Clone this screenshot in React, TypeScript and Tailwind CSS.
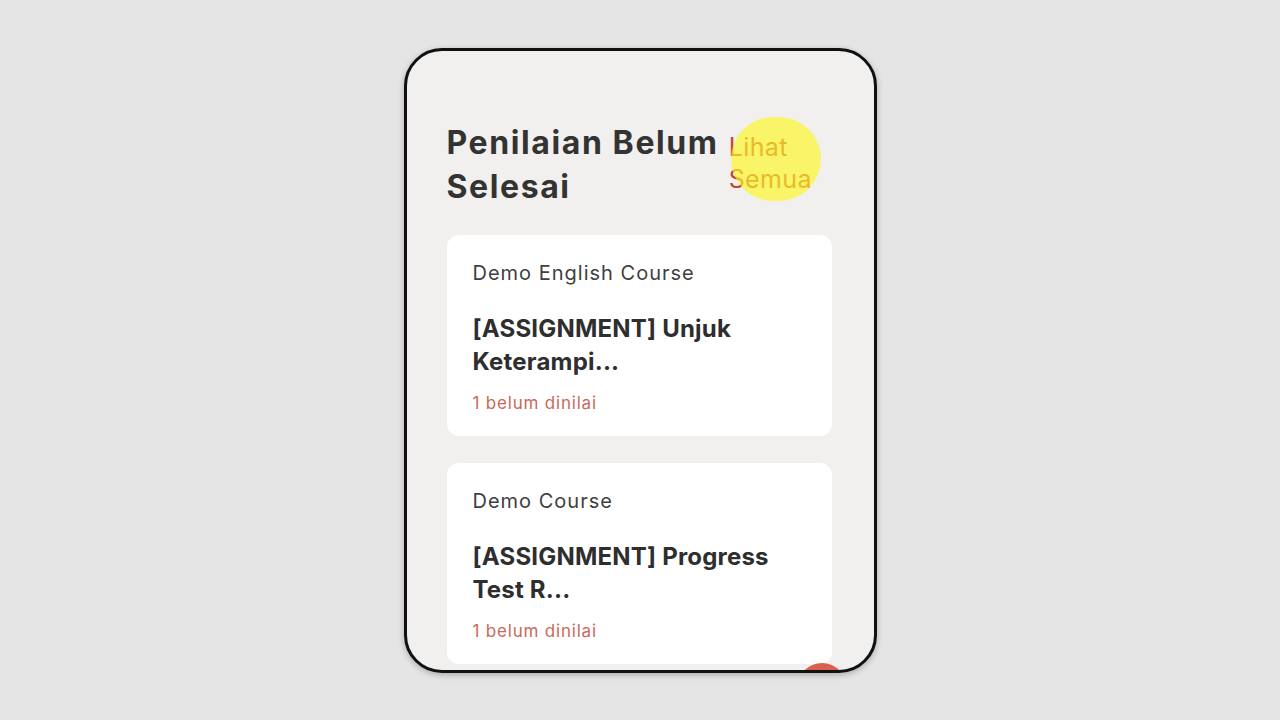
import React from "react";

function Card({ course, title1, title2 }: { course: string; title1: string; title2: string }) {
  return (
    <div className="bg-white rounded-[12px] pl-[26px] pr-6 pt-[24px] pb-[21px] shrink-0">
      <div className="text-[20px] leading-[28px] text-[#3f3f3f] tracking-[1px]">{course}</div>
      <div className="mt-[25px] text-[24px] leading-[33px] font-bold text-[#2e2e2e] tracking-[0.2px]">
        {title1}
        <br />
        {title2}
      </div>
      <div className="mt-[13px] text-[17px] leading-[24px] text-[#c86a5c] tracking-[0.8px]">1 belum dinilai</div>
    </div>
  );
}

export default function App() {
  return (
    <div
      className="w-[1280px] h-[720px] bg-[#e5e5e5] flex items-start justify-center pt-[48px]"
      style={{ fontFamily: "Inter, 'Noto Sans', sans-serif" }}
    >
      <div className="relative w-[473px] h-[625px] rounded-[38px] border-[3px] border-[#111] bg-[#f1f0ee] overflow-hidden shadow-[0_2px_6px_rgba(0,0,0,0.25)]">
        <div className="pl-[40px] pr-[42px] pt-[70px] flex flex-col">
          <div className="flex items-start">
            <h1 className="text-[32px] leading-[44px] font-bold text-[#333] tracking-[1.6px]">
              Penilaian Belum
              <br />
              Selesai
            </h1>
            <div className="relative ml-[10px] mt-[10px]">
              <div className="text-[25px] leading-[32px] text-[#c0463a] tracking-[0.4px] whitespace-nowrap">
                Lihat
                <br />
                Semua
              </div>
              <div className="absolute left-[2px] top-[-14px] w-[90px] h-[84px] rounded-full bg-[#fff820] opacity-65" />
            </div>
          </div>
          <div className="mt-[26px] flex flex-col gap-[27px]">
            <Card course="Demo English Course" title1="[ASSIGNMENT] Unjuk" title2="Keterampi..." />
            <Card course="Demo Course" title1="[ASSIGNMENT] Progress" title2="Test R..." />
          </div>
        </div>
        <div className="absolute left-[390px] top-[612px] w-[50px] h-[50px] rounded-full bg-[#d8604c]" />
      </div>
    </div>
  );
}
